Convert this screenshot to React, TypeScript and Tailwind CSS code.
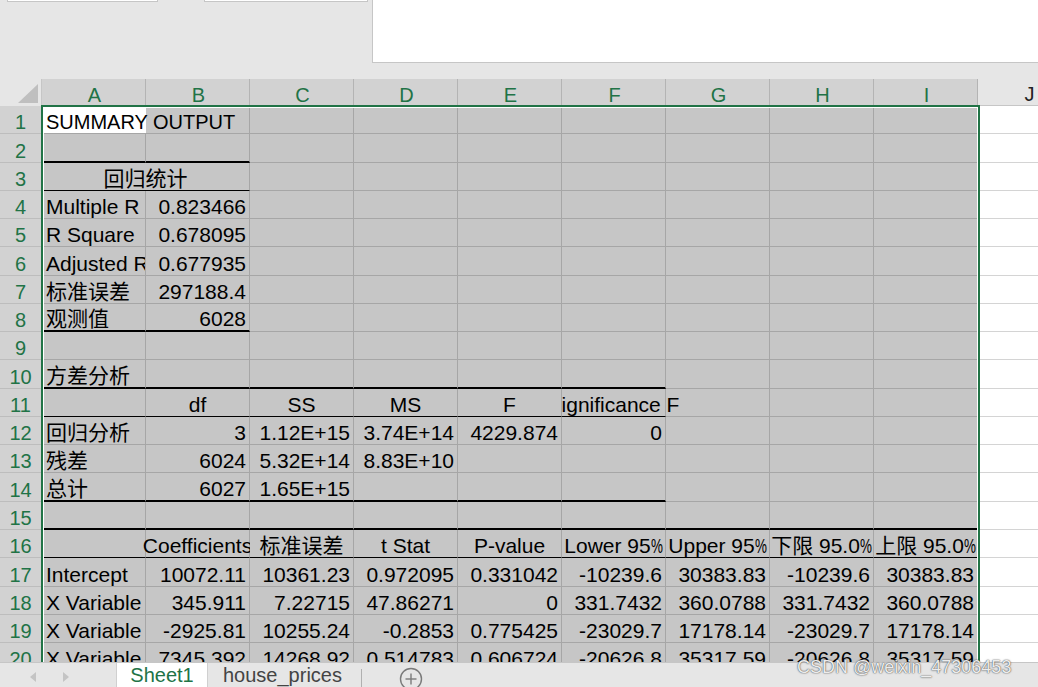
import React from "react";

type Cell = { t?: string; a?: "l" | "c" | "r"; span?: number; k?: "summary" | "sig" | "coef" };

const raw: Cell[][] = [
  [{ t: "SUMMARY OUTPUT", k: "summary" }],
  [],
  [{ t: "回归统计", a: "c", span: 2 }],
  [{ t: "Multiple R" }, { t: "0.823466", a: "r" }],
  [{ t: "R Square" }, { t: "0.678095", a: "r" }],
  [{ t: "Adjusted R Square" }, { t: "0.677935", a: "r" }],
  [{ t: "标准误差" }, { t: "297188.4", a: "r" }],
  [{ t: "观测值" }, { t: "6028", a: "r" }],
  [],
  [{ t: "方差分析" }],
  [{}, { t: "df", a: "c" }, { t: "SS", a: "c" }, { t: "MS", a: "c" }, { t: "F", a: "c" }, { t: "Significance F", a: "c", k: "sig" }],
  [{ t: "回归分析" }, { t: "3", a: "r" }, { t: "1.12E+15", a: "r" }, { t: "3.74E+14", a: "r" }, { t: "4229.874", a: "r" }, { t: "0", a: "r" }],
  [{ t: "残差" }, { t: "6024", a: "r" }, { t: "5.32E+14", a: "r" }, { t: "8.83E+10", a: "r" }],
  [{ t: "总计" }, { t: "6027", a: "r" }, { t: "1.65E+15", a: "r" }],
  [],
  [
    {},
    { t: "Coefficients", a: "c", k: "coef" },
    { t: "标准误差", a: "c" },
    { t: "t Stat", a: "c" },
    { t: "P-value", a: "c" },
    { t: "Lower 95%", a: "c" },
    { t: "Upper 95%", a: "c" },
    { t: "下限 95.0%", a: "c" },
    { t: "上限 95.0%", a: "c" },
  ],
  ["Intercept", "10072.11", "10361.23", "0.972095", "0.331042", "-10239.6", "30383.83", "-10239.6", "30383.83"].map((t, i) => ({ t, a: i === 0 ? "l" : "r" }) as Cell),
  ["X Variable", "345.911", "7.22715", "47.86271", "0", "331.7432", "360.0788", "331.7432", "360.0788"].map((t, i) => ({ t, a: i === 0 ? "l" : "r" }) as Cell),
  ["X Variable", "-2925.81", "10255.24", "-0.2853", "0.775425", "-23029.7", "17178.14", "-23029.7", "17178.14"].map((t, i) => ({ t, a: i === 0 ? "l" : "r" }) as Cell),
  ["X Variable", "7345.392", "14268.92", "0.514783", "0.606724", "-20626.8", "35317.59", "-20626.8", "35317.59"].map((t, i) => ({ t, a: i === 0 ? "l" : "r" }) as Cell),
];

function fill(r: Cell[]): Cell[] {
  const out = [...r];
  let used = out.reduce((s, c) => s + (c.span || 1), 0);
  while (used < 9) {
    out.push({});
    used++;
  }
  return out;
}

function bottom(row: number, col: number): "thick" | "thin" | "grid" {
  if ((row === 2 || row === 8) && col <= 1) return "thick";
  if (row === 3 && col <= 1) return "thin";
  if ((row === 10 || row === 14) && col <= 5) return "thick";
  if (row === 11 && col <= 5) return "thin";
  if (row === 15) return "thick";
  if (row === 16) return "thin";
  return "grid";
}

function Rich({ t }: { t: string }) {
  const parts = t.split(/(%)/);
  return (
    <>
      {parts.map((p, i) =>
        p === "%" ? (
          <span key={i} className="inline-block w-[12px] scale-x-[0.64] origin-left">
            %
          </span>
        ) : (
          <React.Fragment key={i}>{p}</React.Fragment>
        )
      )}
    </>
  );
}

const COLS = ["A", "B", "C", "D", "E", "F", "G", "H", "I"];

export default function App() {
  let col = 0;
  return (
    <div className="relative w-[1038px] h-[687px] overflow-hidden bg-[#e6e6e6] font-['Liberation_Sans','Noto_Sans_CJK_SC',sans-serif] text-black">
      {/* top band */}
      <div className="flex h-[63px]">
        <div className="w-[372px] shrink-0 flex items-start">
          <div className="ml-[7px] w-[151px] h-[2px] bg-white border-x border-b border-[#c6c6c6]" />
          <div className="ml-[46px] w-[164px] h-[2px] bg-white border-x border-b border-[#c6c6c6]" />
        </div>
        <div className="flex-1 bg-white border-l border-b border-[#c6c6c6]" />
      </div>
      <div className="h-[16px]" />

      {/* grid */}
      <div className="relative h-[583px] overflow-hidden">
        <div className="flex h-[27px]">
          <div className="w-[42px] shrink-0 flex items-end justify-end pr-[3px] pb-[3px] border-r border-[#c6c6c6]">
            <svg width="20" height="19" viewBox="0 0 20 19">
              <polygon points="20,0 20,19 0,19" fill="#bfbfbf" />
            </svg>
          </div>
          {COLS.map((c) => (
            <div
              key={c}
              className="w-[104px] shrink-0 bg-[#d2d2d2] border-r border-[#b4b4b4] flex justify-center items-end pl-[2px] text-[20px] leading-[22px] text-[#217346]"
            >
              {c}
            </div>
          ))}
          <div className="w-[104px] shrink-0 bg-[#e6e6e6] border-r border-b border-[#c6c6c6] flex justify-center items-end text-[20px] leading-[22px] text-[#222]">
            J
          </div>
        </div>

        {raw.map((r, ri) => {
          const rowNum = ri + 1;
          col = 0;
          const cells = fill(r);
          return (
            <div key={ri} className="flex h-[28.28px]">
              <div className="w-[42px] shrink-0 bg-[#d2d2d2] border-r border-b border-[#bdbdbd] flex justify-center items-end text-[20px] leading-[22px] text-[#217346]">
                {rowNum}
              </div>
              {cells.map((c, ci) => {
                const startCol = col;
                const span = c.span || 1;
                col += span;
                const b = bottom(rowNum, startCol);
                const bCls =
                  b === "thick"
                    ? "border-b-2 border-b-black"
                    : b === "thin"
                    ? "border-b border-b-black"
                    : "border-b border-b-[#a6a6a6]";
                const aCls =
                  c.a === "r" ? "justify-end pr-[3px]" : c.a === "c" ? "justify-center" : "justify-start pl-[4px]";
                const wCls = span === 2 ? "w-[208px]" : "w-[104px]";
                let kCls = "bg-[#c6c6c6] border-r border-r-[#a6a6a6] overflow-hidden";
                let tCls = "text-[21px]";
                if (c.k === "summary") {
                  kCls = "relative bg-white overflow-visible";
                  tCls = "text-[20px]";
                } else if (c.k === "sig") {
                  kCls = "relative bg-[#c6c6c6] border-r border-r-[#a6a6a6] overflow-visible [clip-path:inset(0_-300px_0_0)]";
                } else if (c.k === "coef") {
                  kCls = "bg-[#c6c6c6] border-r border-r-[#a6a6a6] overflow-visible";
                }
                return (
                  <div key={ci} className={`${wCls} shrink-0 h-full flex items-end ${aCls} ${bCls} ${kCls}`}>
                    {c.t ? (
                      <span className={`whitespace-nowrap leading-[22px] shrink-0 ${tCls}`}>
                        <Rich t={c.t} />
                      </span>
                    ) : null}
                  </div>
                );
              })}
              <div className="w-[104px] shrink-0 bg-white border-r border-b border-[#d4d4d4]" />
            </div>
          );
        })}

        {/* selection overlay */}
        <div className="absolute left-[41px] top-[26px] w-[939px] h-[600px] border-2 border-[#217346] pointer-events-none">
          <div className="w-full h-full border border-white" />
        </div>
      </div>

      {/* sheet tabs */}
      <div className="flex h-[25px] border-t border-[#c6c6c6] bg-[#e6e6e6]">
        <div className="w-[116px] shrink-0 flex items-center">
          <svg className="ml-[30px] mt-[4px]" width="6" height="10" viewBox="0 0 6 10">
            <polygon points="6,0 6,10 0,5" fill="#c4c4c4" />
          </svg>
          <svg className="ml-[27px] mt-[4px]" width="6" height="10" viewBox="0 0 6 10">
            <polygon points="0,0 0,10 6,5" fill="#c4c4c4" />
          </svg>
        </div>
        <div className="w-[92px] shrink-0 bg-white border-x border-[#d0d0d0] flex items-end justify-center pb-[1px] text-[20px] leading-[22px] text-[#217346]">
          Sheet1
        </div>
        <div className="w-[153px] shrink-0 flex items-end pl-[15px] pb-[1px] text-[20px] leading-[22px] text-[#444]">
          house_prices
        </div>
        <div className="w-px shrink-0 mt-[6px] bg-[#b0b0b0]" />
        <div className="ml-[37px] flex items-center pt-[8px]">
          <svg width="24" height="24" viewBox="0 0 24 24">
            <circle cx="12" cy="12" r="10.5" fill="none" stroke="#7a7a7a" strokeWidth="1.4" />
            <line x1="12" y1="6.5" x2="12" y2="17.5" stroke="#7a7a7a" strokeWidth="1.4" />
            <line x1="6.5" y1="12" x2="17.5" y2="12" stroke="#7a7a7a" strokeWidth="1.4" />
          </svg>
        </div>
      </div>

      {/* watermark */}
      <div className="absolute left-[797px] top-[656px] text-[18px] leading-[22px] whitespace-nowrap text-white/90 [text-shadow:0_0_1px_rgba(50,50,50,1),0_0_2px_rgba(60,60,60,0.6)]">
        CSDN @weixin_47306453
      </div>
    </div>
  );
}
